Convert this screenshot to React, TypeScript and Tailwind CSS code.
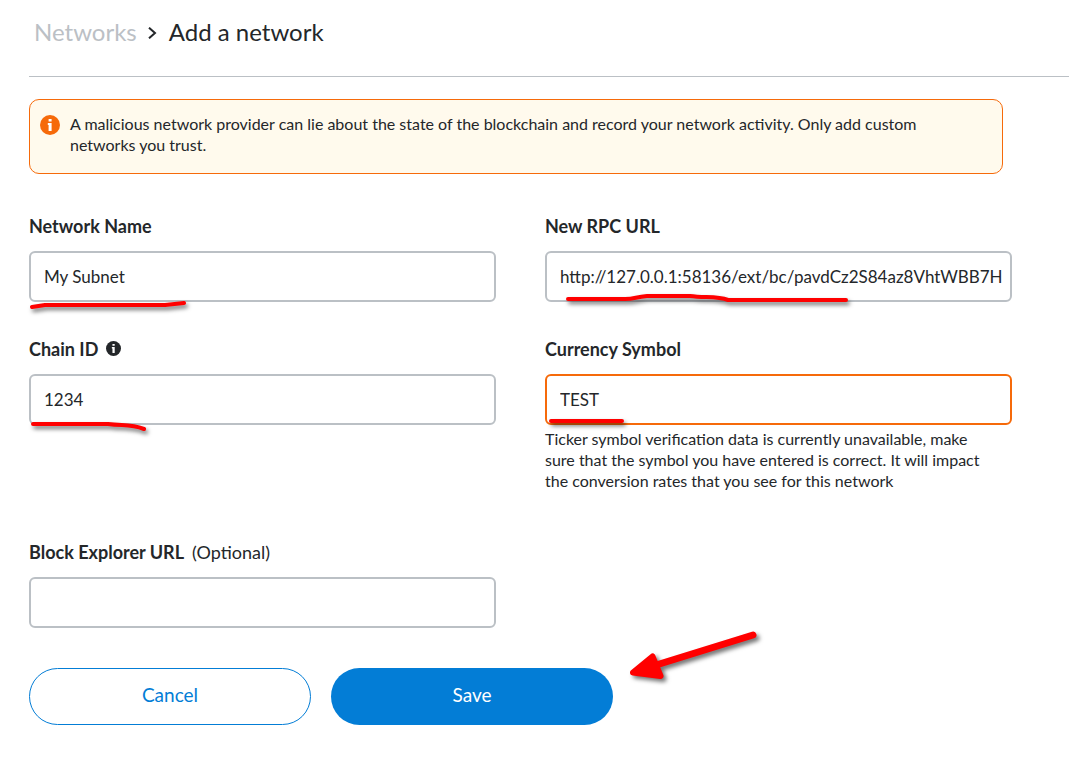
import type { ReactNode } from 'react'

type FieldProps = {
  id: string
  label: ReactNode
  value?: string
  warning?: boolean
  help?: string
  mark?: string
}

// Hand drawn red stroke over the lower edge of a field
function Mark({ d }: { d: string }) {
  return (
    <svg
      className="pointer-events-none absolute top-0 left-0 overflow-visible drop-shadow-[2px_3px_2px_rgba(0,0,0,0.55)]"
      width="310"
      height="62"
      fill="none"
      stroke="#ff0000"
      strokeWidth="4"
      strokeLinecap="round"
      strokeLinejoin="round"
      aria-hidden="true"
    >
      <path d={d} />
    </svg>
  )
}

function Arrow() {
  return (
    <svg
      className="pointer-events-none absolute -top-10 left-[600px] overflow-visible drop-shadow-[3px_3px_2px_rgba(0,0,0,0.55)]"
      width="140"
      height="60"
      aria-hidden="true"
    >
      <path d="M124 7L24 38" stroke="#ff0000" strokeWidth="7" strokeLinecap="round" />
      <path
        d="M4 44.5L23.5 28.5L31.5 48Z"
        fill="#ff0000"
        stroke="#ff0000"
        strokeWidth="6"
        strokeLinejoin="round"
      />
    </svg>
  )
}

function InfoIcon({ className }: { className: string }) {
  return (
    <svg className={className} viewBox="0 0 20 20" aria-hidden="true">
      <circle cx="10" cy="10" r="10" fill="currentColor" />
      <path d="M8.6 4h3v2.4h-3zM7.8 8h3.8v8H8.6V10h-.8z" fill="#fff" />
    </svg>
  )
}

function Field({ id, label, value, warning, help, mark }: FieldProps) {
  return (
    <div>
      <label htmlFor={id} className="flex items-center text-lg leading-6 font-bold">
        {label}
      </label>
      <div className="relative mt-[13px]">
        <input
          id={id}
          type="text"
          defaultValue={value}
          className={
            warning
              ? 'block h-[51px] w-full rounded-md border-2 border-[#f66a0a] bg-white pr-2 pb-px pl-[13px] outline-none'
              : 'block h-[51px] w-full rounded-md border-2 border-[#bbc0c5] bg-white pr-2 pb-px pl-[13px] outline-none'
          }
        />
        {mark && <Mark d={mark} />}
      </div>
      {help && <p className="mt-[3px] mb-[14px] pr-5 text-base leading-[21px]">{help}</p>}
    </div>
  )
}

export default function App() {
  return (
    <div className="min-h-screen bg-white pl-[29px] font-['Lato',sans-serif] text-[17px] text-[#24272a]">
      <header className="flex h-[77px] items-start border-b border-[#bbc0c5] pt-4 pl-[5px] text-2xl leading-8">
        <a href="#networks" className="text-[#bbc0c5]">
          Networks
        </a>
        <svg className="mx-[10px] mt-[11px] h-3 w-3" viewBox="0 0 12 12" fill="none" stroke="currentColor" strokeWidth="2" aria-hidden="true">
          <path d="M2 0.7l6 5.3-6 5.3" />
        </svg>
        <h1>Add a network</h1>
      </header>

      <main className="mr-[57px]">
        <div className="mt-[22px] mr-[9px] flex rounded-[10px] border border-[#f66a0a] bg-[#fffaed] pt-[13px] pr-[60px] pb-[18px] pl-[10px]">
          <InfoIcon className="mt-[2px] mr-[10px] h-5 w-5 shrink-0 text-[#f66a0a]" />
          <p className="text-base leading-[21px]">
            A malicious network provider can lie about the state of the blockchain and record your network activity. Only add custom networks you trust.
          </p>
        </div>

        <form className="mt-10" onSubmit={(e) => e.preventDefault()}>
          <div className="grid grid-cols-2 gap-x-[49px] gap-y-[35px]">
            <Field
              id="network-name"
              label="Network Name"
              value="My Subnet"
              mark="M3 56L16 54L136 54L155 52"
            />
            <Field
              id="rpc-url"
              label="New RPC URL"
              value="http://127.0.0.1:58136/ext/bc/pavdCz2S84az8VhtWBB7H"
              mark="M23 48H80C90 48 90 46 102 45H145C160 47 172 45 183 49H301"
            />
            <Field
              id="chain-id"
              label={
                <>
                  Chain ID
                  <InfoIcon className="mb-[2px] ml-2 h-[15px] w-[15px]" />
                </>
              }
              value="1234"
              mark="M4 50H79C95 52 101 50 115 55"
            />
            <Field
              id="currency"
              label="Currency Symbol"
              value="TEST"
              warning
              help="Ticker symbol verification data is currently unavailable, make sure that the symbol you have entered is correct. It will impact the conversion rates that you see for this network"
              mark="M6 47H77"
            />
            <Field
              id="explorer-url"
              label={
                <>
                  Block Explorer URL
                  <span className="ml-2 font-normal">(Optional)</span>
                </>
              }
            />
          </div>

          <div className="relative mt-10 flex gap-5 text-[19px]">
            <button
              type="button"
              className="h-[57px] w-[282px] rounded-full border border-[#037dd6] pb-[2px] text-[#037dd6]"
            >
              Cancel
            </button>
            <button type="submit" className="h-[57px] w-[282px] rounded-full bg-[#037dd6] pb-[2px] text-white">
              Save
            </button>
            <Arrow />
          </div>
        </form>
      </main>
    </div>
  )
}
